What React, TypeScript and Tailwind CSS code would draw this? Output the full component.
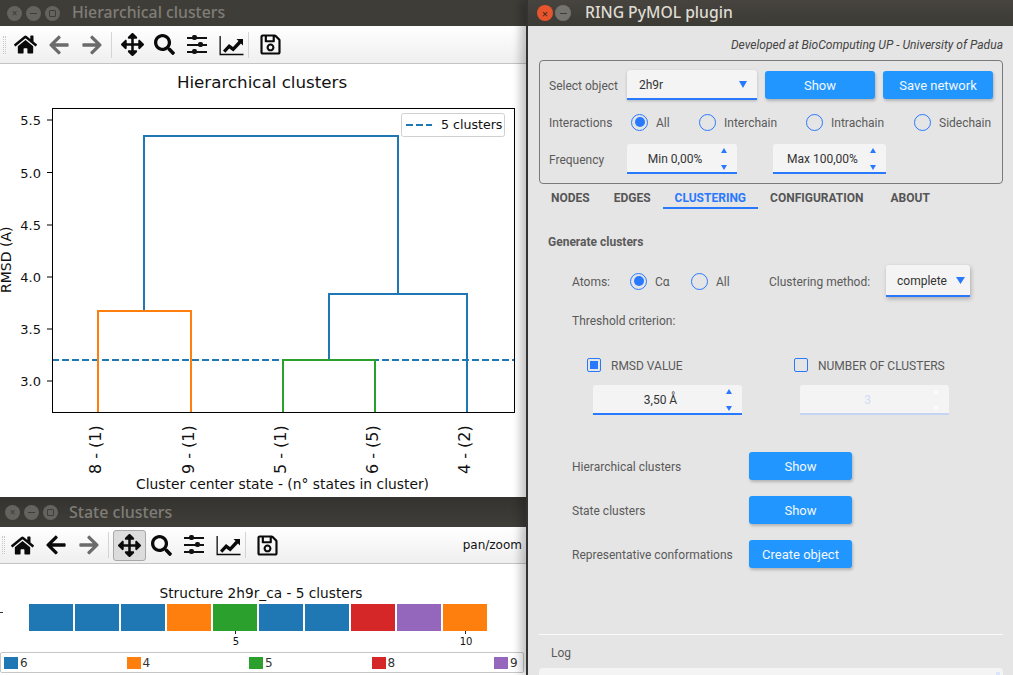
import { FaArrowLeft, FaArrowRight, FaArrowsAlt, FaHome, FaRegSave, FaSearch } from 'react-icons/fa'

const plotFont = { fontFamily: '"DejaVu Sans", sans-serif' }
const barColors = ['#1f77b4', '#1f77b4', '#1f77b4', '#ff7f0e', '#2ca02c', '#1f77b4', '#1f77b4', '#d62728', '#9467bd', '#ff7f0e']
const legendItems = [
  { label: '6', color: '#1f77b4' },
  { label: '4', color: '#ff7f0e' },
  { label: '5', color: '#2ca02c' },
  { label: '8', color: '#d62728' },
  { label: '9', color: '#9467bd' },
]
const yTicks = [
  { label: '5.5', y: 120 },
  { label: '5.0', y: 172.5 },
  { label: '4.5', y: 225 },
  { label: '4.0', y: 277 },
  { label: '3.5', y: 329 },
  { label: '3.0', y: 381 },
]
const xTicks = [
  { label: '8 - (1)', x: 98 },
  { label: '9 - (1)', x: 191 },
  { label: '5 - (1)', x: 283 },
  { label: '6 - (5)', x: 375 },
  { label: '4 - (2)', x: 467 },
]

function SlidersIcon() {
  return (
    <svg width="22" height="22" viewBox="0 0 22 22" fill="#111">
      <rect x="1" y="3" width="20" height="2" />
      <rect x="1" y="10" width="20" height="2" />
      <rect x="1" y="17" width="20" height="2" />
      <rect x="6" y="1" width="5" height="5" rx="2" />
      <rect x="12" y="8" width="5" height="5" rx="2" />
      <rect x="6" y="15" width="5" height="5" rx="2" />
    </svg>
  )
}

function ChartIcon() {
  return (
    <svg width="25" height="22" viewBox="0 0 25 22" fill="#0a0a0a">
      <path d="M0.5 2H1.8V19.8H24.5V21.2H0.5Z" />
      <path d="M4 16.5L10 10L14 13L19.5 7L17.5 5H24V11.5L22 9.5L14.3 17.5L10.3 14.4L6.3 18.7Z" />
    </svg>
  )
}

function WindowDots() {
  return (
    <div className="flex items-center gap-[4px]">
      <span className="flex h-[15px] w-[15px] items-center justify-center rounded-full bg-[#65635e] text-[10px] leading-none text-[#3f3d38]">×</span>
      <span className="flex h-[15px] w-[15px] items-center justify-center rounded-full bg-[#65635e]">
        <span className="h-[1px] w-[7px] bg-[#3f3d38]" />
      </span>
      <span className="flex h-[15px] w-[15px] items-center justify-center rounded-full bg-[#65635e]">
        <span className="h-[7px] w-[7px] rounded-[1px] border border-[#3f3d38]" />
      </span>
    </div>
  )
}

function Toolbar({ back, pressed, status, className, gripClass }: { back: boolean; pressed: boolean; status?: string; className: string; gripClass: string }) {
  const cell = 'flex h-[31px] w-[33px] shrink-0 items-center justify-center'
  return (
    <div className={`flex shrink-0 items-center border-b border-[#c4c4c4] bg-gradient-to-b from-white to-[#efefef] ${className}`}>
      <span className={`h-[18px] w-[3px] border-x border-dotted border-[#c8c8c8] ${gripClass}`} />
      <div className={cell}><FaHome size={23} color="#0a0a0a" /></div>
      <div className={cell}><FaArrowLeft size={22} color={back ? '#0a0a0a' : '#6b6b6b'} /></div>
      <div className={cell}><FaArrowRight size={22} color="#6b6b6b" /></div>
      <span className="ml-[3px] mr-[4px] h-[26px] w-[1px] bg-[#d4d4d4]" />
      <div className={`${cell} rounded-[3px] ${pressed ? 'border border-[#a8a8a8] bg-[#dcdcdc]' : ''}`}><FaArrowsAlt size={23} color="#0a0a0a" /></div>
      <div className={`${cell} -ml-[1px]`}><FaSearch size={21} color="#0a0a0a" /></div>
      <div className={`${cell} -ml-[1px]`}><SlidersIcon /></div>
      <div className={`${cell} ml-[2px]`}><ChartIcon /></div>
      <span className="mr-[5px] h-[26px] w-[1px] bg-[#d4d4d4]" />
      <div className={cell}><FaRegSave size={23} color="#0a0a0a" /></div>
      {status && <span className="ml-auto pr-[4px] text-[12px] text-[#111]" style={plotFont}>{status}</span>}
    </div>
  )
}

function Dendrogram() {
  return (
    <svg className="block shrink-0" width="526" height="433" viewBox="0 64 526 433" style={plotFont}>
      <text x="262" y="88" textAnchor="middle" fontSize="16.7" fill="#111">Hierarchical clusters</text>
      <path d="M52 360H514" stroke="#1f77b4" strokeWidth="1.8" strokeDasharray="7 3" fill="none" />
      <g fill="none" strokeWidth="2">
        <path d="M144 311V136H398V294" stroke="#1f77b4" />
        <path d="M98 412V311H191V412" stroke="#ff7f0e" />
        <path d="M329 360V294H467V412" stroke="#1f77b4" />
        <path d="M283 412V360H375V412" stroke="#2ca02c" />
      </g>
      <rect x="52.5" y="108.5" width="462" height="304" fill="none" stroke="#000" strokeWidth="1" />
      {yTicks.map((t) => (
        <g key={t.label}>
          <path d={`M47 ${t.y}H52`} stroke="#000" />
          <text x="41" y={t.y + 5} textAnchor="end" fontSize="13" fill="#111">{t.label}</text>
        </g>
      ))}
      {xTicks.map((t) => (
        <text key={t.label} transform={`translate(${t.x + 3} 474) rotate(-90)`} fontSize="16" fill="#111">{t.label}</text>
      ))}
      <text transform="translate(11 293) rotate(-90)" fontSize="14" fill="#111">RMSD (A)</text>
      <text x="282.5" y="489" textAnchor="middle" fontSize="13.85" fill="#111">Cluster center state - (n° states in cluster)</text>
      <rect x="401.5" y="113.5" width="103" height="23" rx="2" fill="#fff" stroke="#d0d0d0" />
      <path d="M406 125H432" stroke="#1f77b4" strokeWidth="1.8" strokeDasharray="7 3" />
      <text x="441" y="129" fontSize="12.6" fill="#111">5 clusters</text>
    </svg>
  )
}

function StateChart() {
  return (
    <div className="relative flex-1 bg-white" style={plotFont}>
      <div className="pr-[4px] pt-[21px] text-center text-[13.7px] leading-[16px] text-[#111]">Structure 2h9r_ca - 5 clusters</div>
      <div className="mt-[3px] flex gap-[2px] pl-[29px]">
        {barColors.map((color, i) => (
          <div key={i} className="relative h-[27px] w-[44px]" style={{ backgroundColor: color }}>
            {(i === 4 || i === 9) && <span className="absolute left-[22px] top-[27px] h-[3px] w-[1px] bg-[#222]" />}
            {(i === 4 || i === 9) && (
              <span className="absolute left-[1px] top-[32px] w-full text-center text-[10px] leading-[12px] text-[#111]">{i + 1}</span>
            )}
          </div>
        ))}
      </div>
      <span className="absolute left-0 top-[48px] h-[1px] w-[3px] bg-[#333]" />
      <div className="absolute bottom-[2px] left-0 flex h-[21px] w-[524px] items-center justify-between rounded-[2px] border border-[#c6c6c6] pl-[3px] pr-[5px]">
        {legendItems.map((item) => (
          <div key={item.label} className="flex items-center gap-[2px] text-[12px] text-[#333]">
            <span className="h-[12px] w-[14px]" style={{ backgroundColor: item.color }} />
            <span className="w-[8px]">{item.label}</span>
          </div>
        ))}
      </div>
    </div>
  )
}

function Radio({ checked, label, className = '' }: { checked?: boolean; label: string; className?: string }) {
  return (
    <div className={`flex items-center gap-[8px] ${className}`}>
      <span className="flex h-[17px] w-[17px] items-center justify-center rounded-full border-[1.5px] border-[#2979ff]">
        {checked && <span className="h-[10px] w-[10px] rounded-full bg-[#2979ff]" />}
      </span>
      <span className="pt-[2px]">{label}</span>
    </div>
  )
}

function Check({ checked, label }: { checked?: boolean; label: string }) {
  return (
    <div className="flex items-center gap-[10px]">
      <span className="flex h-[14px] w-[14px] items-center justify-center rounded-[2px] border-[1.5px] border-[#2979ff]">
        {checked && <span className="h-[8px] w-[8px] bg-[#2979ff]" />}
      </span>
      <span className="pt-[2px]">{label}</span>
    </div>
  )
}

function Triangle({ up, color = '#2979ff', w = 6, h = 5 }: { up?: boolean; color?: string; w?: number; h?: number }) {
  return (
    <svg className="block" width={w} height={h} viewBox="0 0 6 5" preserveAspectRatio="none" fill={color}>
      <path d={up ? 'M3 0L6 5H0Z' : 'M0 0H6L3 5Z'} />
    </svg>
  )
}

function Spin({ value, className, disabled }: { value: string; className: string; disabled?: boolean }) {
  const arrow = disabled ? '#fbfbfb' : '#2979ff'
  return (
    <div className={`relative flex h-[30px] items-center justify-center rounded-t-[3px] border-b-2 bg-[#f4f4f4] pr-[14px] text-[12px] ${disabled ? 'border-[#c3d5f2] text-[#cfdcf5]' : 'border-[#2979ff] text-[#333]'} ${className}`}>
      <span className="pt-[2px]">{value}</span>
      <div className="absolute bottom-[2px] right-[10px] top-[4px] flex flex-col justify-between">
        <Triangle up color={arrow} />
        <Triangle color={arrow} />
      </div>
    </div>
  )
}

function BlueButton({ label, className }: { label: string; className: string }) {
  return (
    <button className={`h-[28px] rounded-[3px] bg-[#2196ff] pt-[2px] text-[13px] text-[#f4f8ff] shadow-[1px_2px_3px_rgba(0,0,0,0.22)] ${className}`}>{label}</button>
  )
}

function ActionRow({ label, action }: { label: string; action: string }) {
  return (
    <div className="flex items-center">
      <span className="w-[177px] pt-[2px]">{label}</span>
      <BlueButton label={action} className="w-[103px]" />
    </div>
  )
}

function Tab({ label, active, className = '' }: { label: string; active?: boolean; className?: string }) {
  return (
    <div className={`flex h-[25px] items-center border-b-2 px-[12px] pt-[4px] text-[12px] font-bold ${active ? 'border-[#2979ff] text-[#2979ff]' : 'border-transparent text-[#555]'} ${className}`}>{label}</div>
  )
}

export default function App() {
  return (
    <div className="relative h-[675px] w-[1013px] overflow-hidden bg-[#2c2c2c]">
      {/* Hierarchical clusters window */}
      <div className="absolute left-0 top-0 flex h-[497px] w-[526px] flex-col bg-white">
        <div className="flex h-[26px] shrink-0 items-center gap-[12px] bg-[#3f3d38] pl-[7px] text-[15.8px] font-medium text-[#7f7d77]" style={{ fontFamily: '"Noto Sans", sans-serif' }}>
          <WindowDots />
          <span>Hierarchical clusters</span>
        </div>
        <Toolbar back={false} pressed={false} className="h-[38px] pl-[3px]" gripClass="mr-[3px]" />
        <Dendrogram />
      </div>

      {/* State clusters window */}
      <div className="absolute left-0 top-[497px] flex h-[178px] w-[526px] flex-col bg-white">
        <div className="flex h-[30px] shrink-0 items-center gap-[11px] bg-gradient-to-b from-[#35332f] to-[#403e39] pl-[5px] text-[16px] font-medium text-[#7f7d77]" style={{ fontFamily: '"Noto Sans", sans-serif' }}>
          <WindowDots />
          <span>State clusters</span>
        </div>
        <Toolbar back pressed status="pan/zoom" className="h-[37px] pl-[2px]" gripClass="mr-[1px]" />
        <StateChart />
      </div>

      {/* RING plugin window */}
      <div className="absolute left-[526px] top-0 flex h-[675px] w-[487px] flex-col overflow-visible border-l-2 border-[#333] bg-[#e5e5e5] text-[12px] text-[#5a5a5a] shadow-[-6px_0_8px_rgba(0,0,0,0.22)]" style={{ fontFamily: 'Roboto, sans-serif' }}>
        <div className="flex h-[26px] shrink-0 items-center gap-[14px] bg-gradient-to-b from-[#47443f] to-[#3c3a35] pl-[9px] text-[15.7px] font-medium text-[#dedbd2]" style={{ fontFamily: '"Noto Sans", sans-serif' }}>
          <div className="flex items-center gap-[2px]">
            <span className="flex h-[16px] w-[16px] items-center justify-center rounded-full bg-[#e8552c] text-[11px] leading-none text-[#3f2a20]">×</span>
            <span className="flex h-[16px] w-[16px] items-center justify-center rounded-full bg-[#75736e]">
              <span className="h-[1px] w-[7px] bg-[#3f3d38]" />
            </span>
          </div>
          <span>RING PyMOL plugin</span>
        </div>

        <div className="pl-[11px] pr-[10px]">
          <div className="h-[34px] pt-[11px] text-right text-[12.05px] italic leading-[16px] text-[#444]">Developed at BioComputing UP - University of Padua</div>

          <div className="flex h-[124px] flex-col gap-[7px] rounded-[4px] border border-[#7a7a7a] px-[9px] pt-[9px]">
            <div className="flex h-[30px] items-center">
              <span className="w-[78px] pt-[2px]">Select object</span>
              <div className="relative flex h-[30px] w-[130px] items-center rounded-t-[3px] border-b-2 border-[#2979ff] bg-[#f4f4f4] pl-[12px] pt-[2px] text-[#333] shadow-[0_1px_3px_rgba(0,0,0,0.2)]">
                2h9r
                <span className="absolute right-[10px] top-[11px]"><Triangle w={8} h={7} /></span>
              </div>
              <BlueButton label="Show" className="ml-[8px] w-[110px]" />
              <BlueButton label="Save network" className="ml-[8px] w-[110px]" />
            </div>
            <div className="flex h-[30px] items-center">
              <span className="w-[82px] pt-[2px]">Interactions</span>
              <Radio checked label="All" className="w-[68px]" />
              <Radio label="Interchain" className="w-[107px]" />
              <Radio label="Intrachain" className="w-[108px]" />
              <Radio label="Sidechain" />
            </div>
            <div className="flex h-[30px] items-center">
              <span className="w-[78px] pt-[2px]">Frequency</span>
              <Spin value="Min 0,00%" className="w-[110px]" />
              <Spin value="Max 100,00%" className="ml-[36px] w-[113px]" />
            </div>
          </div>

          <div className="flex">
            <Tab label="NODES" />
            <Tab label="EDGES" />
            <Tab label="CLUSTERING" active />
            <Tab label="CONFIGURATION" />
            <Tab label="ABOUT" className="ml-[3px]" />
          </div>

          <div className="pl-[9px] pt-[25px] font-bold leading-[16px]">Generate clusters</div>

          <div className="pl-[33px]">
            <div className="mt-[15px] flex h-[32px] items-center">
              <span className="w-[58px] pt-[2px]">Atoms:</span>
              <Radio checked label="Cα" className="w-[61px]" />
              <Radio label="All" className="w-[78px]" />
              <span className="w-[117px] pt-[2px]">Clustering method:</span>
              <div className="relative flex h-[32px] w-[84px] items-center rounded-t-[3px] border-b-2 border-[#2979ff] bg-[#f4f4f4] pl-[11px] pt-[2px] text-[#333] shadow-[1px_2px_4px_rgba(0,0,0,0.25)]">
                complete
                <span className="absolute right-[5px] top-[12px]"><Triangle w={9} h={7} /></span>
              </div>
            </div>
            <div className="mt-[16px] leading-[16px]">Threshold criterion:</div>

            <div className="mt-[20px] flex h-[32px] items-center pl-[15px]">
              <div className="w-[207px]"><Check checked label="RMSD VALUE" /></div>
              <Check label="NUMBER OF CLUSTERS" />
            </div>
            <div className="mt-[4px] flex pl-[21px]">
              <Spin value="3,50 Å" className="w-[149px]" />
              <Spin value="3" className="ml-[58px] w-[149px]" disabled />
            </div>

            <div className="mt-[37px] flex flex-col gap-[16px]">
              <ActionRow label="Hierarchical clusters" action="Show" />
              <ActionRow label="State clusters" action="Show" />
              <ActionRow label="Representative conformations" action="Create object" />
            </div>
          </div>

          <div className="mt-[66px] h-[1px] bg-[#fafafa]" />
          <div className="pl-[12px] pt-[10px] leading-[16px]">Log</div>
          <div className="mt-[7px] flex h-[7px] items-end justify-end rounded-t-[4px] bg-[#f4f4f4] pr-[3px]">
            <span className="h-[3px] w-[4px] bg-[#dbe6fb]" />
          </div>
        </div>
      </div>
    </div>
  )
}
